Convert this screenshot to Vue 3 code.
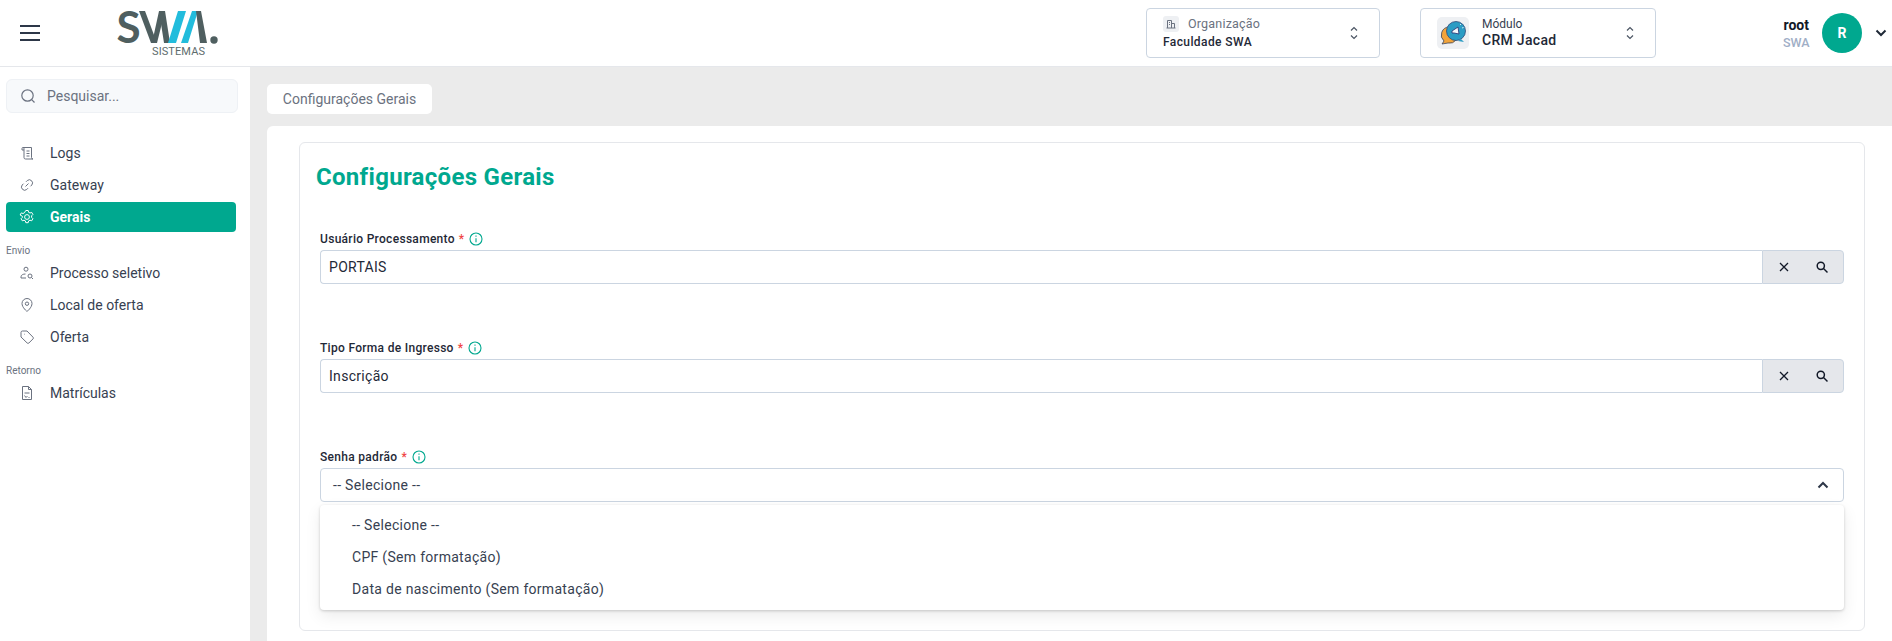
<script setup>
const navTop = [
  { label: 'Logs', icon: 'logs' },
  { label: 'Gateway', icon: 'link' },
  { label: 'Gerais', icon: 'gear', active: true }
]
const navSend = [
  { label: 'Processo seletivo', icon: 'person' },
  { label: 'Local de oferta', icon: 'pin' },
  { label: 'Oferta', icon: 'tag' }
]
const navBack = [{ label: 'Matrículas', icon: 'doc' }]
const lookups = [
  { label: 'Usuário Processamento', value: 'PORTAIS' },
  { label: 'Tipo Forma de Ingresso', value: 'Inscrição' }
]
const options = ['-- Selecione --', 'CPF (Sem formatação)', 'Data de nascimento (Sem formatação)']
const icons = {
  logs: 'M4 2.5h8.5v10a1.5 1.5 0 0 0 1.5 1.5H6.5A1.5 1.5 0 0 1 5 12.5V3.5a1 1 0 0 0-1-1a1 1 0 0 0-1 1V5h2M7.5 6h3M7.5 8.5h3M7.5 11h3',
  link: 'M6.5 9.5l3-3M7 4.8l1.3-1.3a3.2 3.2 0 0 1 4.5 4.5l-1.3 1.3M9 11.2l-1.3 1.3a3.2 3.2 0 0 1-4.5-4.5l1.3-1.3',
  person: 'M7 2.2a2 2 0 1 1 0 4 2 2 0 0 1 0-4zM2 13v-1.2c0-1.8 2-2.8 4.5-2.8M11 9a2 2 0 1 1 0 4 2 2 0 0 1 0-4zM12.6 12.6L14 14M2 13h5',
  pin: 'M8 14.5S3 10.5 3 6.5a5 5 0 0 1 10 0c0 4-5 8-5 8zM8 5a1.7 1.7 0 1 1 0 3.4A1.7 1.7 0 0 1 8 5z',
  tag: 'M2 3.5A1.5 1.5 0 0 1 3.5 2H8l6 6.2a1.2 1.2 0 0 1 0 1.7l-4.1 4.1a1.2 1.2 0 0 1-1.7 0L2 8zM5 5.2h.6',
  doc: 'M3.5 1.5h6l3 3v10h-9zM9.5 1.5v3h3M5.5 8h5M5.5 10.5l1.5 2 1.5-1.5M9.5 12.5h1'
}
</script>

<template>
  <div class="app">
    <header class="topbar">
      <button class="burger" type="button" aria-label="Menu"><span></span><span></span><span></span></button>
      <div class="logo">
        <svg width="100" height="33" viewBox="0 0 100 33" class="logo-mark">
          <text x="-1.5" y="32" class="logo-s">S</text>
          <polygon points="21,0 27,0 39,32 33,32" fill="#4f5f60" />
          <polygon points="34,32 39,32 47,0 41,0" fill="#4f5f60" />
          <polygon points="41,0 47,0 52,32 46,32" fill="#4f5f60" />
          <polygon points="60,0 68,0 58,32 50,32" fill="#22bcdc" />
          <polygon points="74,0 80,0 70,32 63,32" fill="#22bcdc" />
          <polygon points="78,0 83,0 89,32 82,32" fill="#4f5f60" />
          <circle cx="96" cy="29" r="3.7" fill="#4f5f60" />
        </svg>
        <span class="logo-sub">SISTEMAS</span>
      </div>
      <div class="spacer"></div>
      <div class="switch org">
        <div class="switch-text">
          <div class="org-top">
            <span class="org-ico">
              <svg width="10" height="10" viewBox="0 0 10 10" fill="none" stroke="#6b7280" stroke-width="1"><path d="M1.5 9V1.5h4V9M5.5 4.5h3V9M0.5 9h9M3 3.5h1M3 5.5h1" /></svg>
            </span>
            <span class="org-label">Organização</span>
          </div>
          <div class="org-value">Faculdade SWA</div>
        </div>
        <svg class="updown" width="10" height="16" viewBox="0 0 10 16" fill="none" stroke="#4b5563" stroke-width="1.2"><path d="M2 5.5L5 2.5L8 5.5M2 10.5L5 13.5L8 10.5" /></svg>
      </div>
      <div class="switch mod">
        <span class="mod-ico">
          <svg width="28" height="28" viewBox="0 0 28 28">
            <path d="M10 8a8 8 0 0 0-5 14l-2 3 6-1a8 8 0 0 0 8-3z" fill="#f2a43a" stroke="#3a4560" stroke-width=".8" />
            <circle cx="17" cy="12" r="9.5" fill="#2b9cc4" stroke="#2f4a78" stroke-width=".8" />
            <path d="M22 20l3 3-6-1z" fill="#2b9cc4" />
            <path d="M13 12l6-4 1 7-5-1-2 0z" fill="#f4f7fb" stroke="#2c3e7a" stroke-width=".9" />
            <path d="M21 6l1-1M23 9l1.5-.5" stroke="#e8f4fa" stroke-width=".9" />
          </svg>
        </span>
        <div class="switch-text">
          <div class="mod-label">Módulo</div>
          <div class="mod-value">CRM Jacad</div>
        </div>
        <svg class="updown" width="10" height="16" viewBox="0 0 10 16" fill="none" stroke="#4b5563" stroke-width="1.2"><path d="M2 5.5L5 2.5L8 5.5M2 10.5L5 13.5L8 10.5" /></svg>
      </div>
      <div class="user">
        <div class="user-text">
          <div class="user-name">root</div>
          <div class="user-org">SWA</div>
        </div>
        <div class="avatar">R</div>
        <svg width="12" height="8" viewBox="0 0 12 8" fill="none" stroke="#1f2937" stroke-width="2"><path d="M1.5 1.5L6 6l4.5-4.5" /></svg>
      </div>
    </header>

    <div class="body">
      <aside class="sidebar">
        <div class="search">
          <svg width="16" height="16" viewBox="0 0 16 16" fill="none" stroke="#6b7280" stroke-width="1.2"><circle cx="7.5" cy="7.5" r="5.7" /><path d="M11.7 11.7L14.5 14.5" /></svg>
          <span>Pesquisar...</span>
        </div>
        <nav class="nav">
          <div v-for="item in navTop" :key="item.label" class="nav-item" :class="{ active: item.active }">
            <svg v-if="item.icon === 'gear'" class="nav-ico" width="16" height="16" viewBox="0 0 16 16" fill="none" stroke="#fff" stroke-width="1"><circle cx="8" cy="8" r="2.4" /><path d="M6.8 1.5h2.4l.4 1.8 1.4.7 1.7-.6 1.2 2.1-1.3 1.3v1.6l1.3 1.3-1.2 2.1-1.7-.6-1.4.7-.4 1.8H6.8l-.4-1.8-1.4-.7-1.7.6-1.2-2.1 1.3-1.3V7.3L1.1 6l1.2-2.1 1.7.6 1.4-.7z" /></svg>
            <svg v-else class="nav-ico" width="16" height="16" viewBox="0 0 16 16" fill="none" stroke="#6b7280" stroke-width="1"><path :d="icons[item.icon]" /></svg>
            <span>{{ item.label }}</span>
          </div>
          <div class="nav-group">Envio</div>
          <div v-for="item in navSend" :key="item.label" class="nav-item">
            <svg class="nav-ico" width="16" height="16" viewBox="0 0 16 16" fill="none" stroke="#6b7280" stroke-width="1"><path :d="icons[item.icon]" /></svg>
            <span>{{ item.label }}</span>
          </div>
          <div class="nav-group">Retorno</div>
          <div v-for="item in navBack" :key="item.label" class="nav-item">
            <svg class="nav-ico" width="16" height="16" viewBox="0 0 16 16" fill="none" stroke="#6b7280" stroke-width="1"><path :d="icons[item.icon]" /></svg>
            <span>{{ item.label }}</span>
          </div>
        </nav>
      </aside>

      <main class="main">
        <div class="tab">Configurações Gerais</div>
        <section class="panel">
          <div class="card">
            <h1 class="title">Configurações Gerais</h1>
            <div class="form">
              <div v-for="field in lookups" :key="field.label" class="field">
                <div class="label">
                  <span>{{ field.label }}</span><span class="req">*</span>
                  <svg width="14" height="14" viewBox="0 0 14 14" fill="none" stroke="#00a88f" stroke-width="1.1"><circle cx="7" cy="7" r="6" /><path d="M7 6.2v4M7 3.6v1.2" /></svg>
                </div>
                <div class="lookup">
                  <div class="lookup-value">{{ field.value }}</div>
                  <div class="addon">
                    <svg width="12" height="12" viewBox="0 0 12 12" fill="none" stroke="#111827" stroke-width="1.3"><path d="M2 2l8 8M10 2l-8 8" /></svg>
                    <svg width="14" height="14" viewBox="0 0 14 14" fill="none" stroke="#111827" stroke-width="1.5"><circle cx="5.8" cy="5.8" r="3.6" /><path d="M8.5 8.5L12.5 12.5" /></svg>
                  </div>
                </div>
              </div>
              <div class="field">
                <div class="label">
                  <span>Senha padrão</span><span class="req">*</span>
                  <svg width="14" height="14" viewBox="0 0 14 14" fill="none" stroke="#00a88f" stroke-width="1.1"><circle cx="7" cy="7" r="6" /><path d="M7 6.2v4M7 3.6v1.2" /></svg>
                </div>
                <div class="select">
                  <span>-- Selecione --</span>
                  <svg width="12" height="8" viewBox="0 0 12 8" fill="none" stroke="#2d3748" stroke-width="2"><path d="M1.5 6.5L6 2l4.5 4.5" /></svg>
                  <ul class="menu">
                    <li v-for="option in options" :key="option">{{ option }}</li>
                  </ul>
                </div>
              </div>
            </div>
          </div>
        </section>
      </main>
    </div>
  </div>
</template>

<style>
html, body { margin: 0; background: #fff; overflow: hidden; }
</style>

<style scoped>
.app {
  height: 641px;
  width: 1892px;
  overflow: hidden;
  display: flex;
  flex-direction: column;
  font-family: Roboto, "Liberation Sans", sans-serif;
  color: #374151;
}
.topbar {
  height: 66px;
  flex: none;
  display: flex;
  align-items: center;
  background: #fff;
  border-bottom: 1px solid #e5e7eb;
  box-sizing: content-box;
}
.burger {
  margin-left: 20px;
  width: 20px;
  height: 16px;
  padding: 0;
  border: 0;
  background: none;
  display: flex;
  flex-direction: column;
  justify-content: space-between;
}
.burger span { display: block; height: 2px; background: #2d3748; }
.logo {
  margin-left: 78px;
  width: 110px;
  height: 56px;
  display: flex;
  flex-direction: column;
}
.logo-mark { margin-top: 6px; overflow: visible; flex: none; }
.logo-s {
  font-family: Lato, "Open Sans", sans-serif;
  font-weight: 700;
  font-size: 44px;
  fill: #4f5f60;
}
.logo-sub {
  margin-left: 34px;
  font-size: 11px;
  line-height: 11px;
  margin-top: 2px;
  letter-spacing: 0.1px;
  color: #5e6c6d;
}
.spacer { flex: 1; }
.switch {
  height: 50px;
  box-sizing: border-box;
  border: 1px solid #cbd5e1;
  border-radius: 4px;
  display: flex;
  align-items: center;
  background: #fff;
}
.org { width: 234px; padding: 0 20px 0 16px; margin-right: 40px; }
.mod { width: 236px; padding: 0 20px 0 16px; margin-right: 0; gap: 13px; }
.switch-text { flex: 1; min-width: 0; }
.updown { flex: none; }
.org-top { display: flex; align-items: center; gap: 9px; height: 17px; }
.org-ico {
  width: 16px;
  height: 16px;
  background: #eef0f3;
  border-radius: 3px;
  display: flex;
  align-items: center;
  justify-content: center;
}
.org-label { font-size: 12.5px; color: #6b7280; letter-spacing: 0.2px; }
.org-value { font-size: 12px; font-weight: 500; color: #1f2937; margin-top: 1px; line-height: 18px; letter-spacing: 0.4px; }
.mod-ico {
  width: 32px;
  height: 32px;
  background: #eef0f3;
  border-radius: 5px;
  display: flex;
  align-items: center;
  justify-content: center;
  flex: none;
}
.mod-label { font-size: 12px; color: #374151; line-height: 15px; }
.mod-value { font-size: 14px; font-weight: 500; color: #1f2937; line-height: 17px; letter-spacing: 0.3px; }
.user { margin-left: 127px; display: flex; align-items: center; margin-right: 5px; }
.user-text { text-align: right; width: 26px; margin-right: 13px; }
.user-name { font-size: 14px; font-weight: 700; color: #111827; line-height: 18px; }
.user-org { font-size: 12.5px; font-weight: 500; color: #a0aec6; line-height: 17px; }
.avatar {
  width: 40px;
  height: 40px;
  border-radius: 50%;
  background: #00a88f;
  color: #fff;
  font-size: 14px;
  font-weight: 700;
  display: flex;
  align-items: center;
  justify-content: center;
  margin-right: 13px;
}
.body { flex: 1; display: flex; min-height: 0; }
.sidebar {
  width: 250px;
  flex: none;
  background: #fff;
  padding: 12px 14px 0 6px;
  box-sizing: border-box;
}
.search {
  height: 34px;
  box-sizing: border-box;
  width: 232px;
  background: #f7f9fb;
  border: 1px solid #eef1f5;
  border-radius: 6px;
  display: flex;
  align-items: center;
  gap: 11px;
  padding-left: 13px;
  font-size: 14px;
  color: #6b7280;
}
.nav { margin-top: 24px; width: 230px; display: flex; flex-direction: column; }
.nav-item {
  height: 30px;
  margin: 1px 0;
  border-radius: 4px;
  display: flex;
  align-items: center;
  gap: 14px;
  padding-left: 13px;
  font-size: 14px;
  color: #374151;
}
.nav-ico { flex: none; width: 16px; height: 16px; margin-right: 1px; }
.nav-item.active { background: #00a88f; color: #fff; font-weight: 700; }
.nav-group {
  font-size: 10px;
  line-height: 12px;
  color: #6b7280;
  margin: 12px 0 0;
}
.main {
  flex: 1;
  min-width: 0;
  background: #ebebeb;
  padding: 17px 0 0 17px;
  box-sizing: border-box;
}
.tab {
  width: 165px;
  height: 30px;
  background: #fff;
  border-radius: 5px;
  font-size: 14px;
  color: #6b7280;
  display: flex;
  align-items: center;
  justify-content: center;
}
.panel {
  margin-top: 12px;
  background: #fff;
  border-radius: 6px 0 0 0;
  padding: 16px 27px 0 32px;
  height: 600px;
  box-sizing: border-box;
}
.card {
  height: 489px;
  box-sizing: border-box;
  border: 1px solid #e5e7eb;
  border-radius: 6px;
  padding: 18px 20px 0 16px;
}
.title {
  margin: 0;
  font-size: 24px;
  line-height: 32px;
  font-weight: 700;
  color: #00a88f;
  letter-spacing: 0.3px;
}
.form { margin: 38px 0 0 4px; display: flex; flex-direction: column; gap: 56px; }
.label {
  height: 16px;
  margin-bottom: 3px;
  font-size: 12px;
  font-weight: 500;
  line-height: 16px;
  color: #1f2937;
  letter-spacing: 0.3px;
  display: flex;
  align-items: center;
}
.req { color: #ef4444; margin: 0 5px 0 4px; }
.lookup { display: flex; height: 34px; }
.lookup-value {
  flex: 1;
  box-sizing: border-box;
  border: 1px solid #cbd5e1;
  border-right: 0;
  border-radius: 4px 0 0 4px;
  padding-left: 8px;
  font-size: 14px;
  line-height: 32px;
  color: #1f2937;
  letter-spacing: 0.3px;
}
.addon {
  width: 82px;
  box-sizing: border-box;
  background: #e5e7eb;
  border: 1px solid #cbd5e1;
  border-radius: 0 4px 4px 0;
  display: flex;
  align-items: center;
  justify-content: space-between;
  padding: 0 14px 0 15px;
}
.select {
  position: relative;
  height: 34px;
  box-sizing: border-box;
  border: 1px solid #cbd5e1;
  border-radius: 4px;
  display: flex;
  align-items: center;
  justify-content: space-between;
  padding: 0 14px 0 12px;
  font-size: 14px;
  color: #374151;
  letter-spacing: 0.3px;
}
.menu {
  position: absolute;
  top: 36px;
  left: -1px;
  right: -1px;
  height: 105px;
  box-sizing: border-box;
  margin: 0;
  padding: 4px 0 0;
  list-style: none;
  background: #fff;
  border-radius: 4px;
  box-shadow: 0 1px 3px rgba(0, 0, 0, 0.18), 0 6px 16px rgba(0, 0, 0, 0.08);
}
.menu li {
  height: 32px;
  line-height: 32px;
  padding-left: 32px;
  font-size: 14px;
  color: #374151;
}
</style>
